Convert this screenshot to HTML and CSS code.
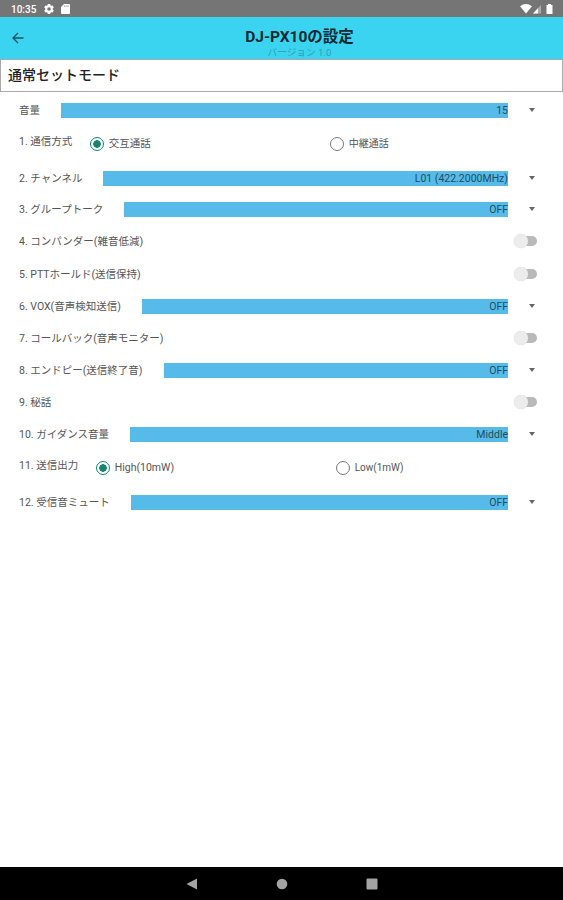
FILE: index.html
```html
<!DOCTYPE html>
<html lang="ja">
<head>
    <meta charset="UTF-8">
    <meta name="viewport" content="width=device-width, initial-scale=1.0">
    <title>DJ-PX10の設定</title>
    <link rel="stylesheet" href="styles.css">
</head>
<body>
    <div class="status-bar">
        <span class="clock">10:35</span>
        <svg class="gear" width="10" height="10" viewBox="2 2 20 20"><path fill="#fff" fill-rule="evenodd" d="M9.6 2h4.8l.5 2.7 1.8 1 2.6-.9 2.4 4.1-2.1 1.8v2.6l2.1 1.8-2.4 4.1-2.6-.9-1.8 1-.5 2.7H9.6l-.5-2.7-1.8-1-2.6.9-2.4-4.1 2.1-1.8v-2.6L2.3 8.900l2.4-4.1 2.6.9 1.8-1zM12 8.500a3.500 3.500 0 1 0 0 7 3.500 3.500 0 0 0 0-7z"/></svg>
        <svg class="sd" width="9" height="10" viewBox="0 0 9 10"><path fill="#fff" d="M3 0h5q1 0 1 1v8q0 1-1 1H1q-1 0-1-1V3z"/><path stroke="#999" stroke-width=".8" d="M3.500 1.300v1.700M5.200 1.300v1.700M6.900 1.300v1.700"/></svg>
        <svg class="signals" width="34" height="12" viewBox="0 0 34 12">
            <path fill="#fff" d="M0 3.200Q6 -1.200 12 3.200L6 10.500z"/>
            <path fill="#aaa" d="M21 2v8.500h-8z"/>
            <path fill="#fff" d="M18 5.300v5.200h-5z"/>
            <path fill="#fff" d="M28 1h3v1h1.500v9h-6V2H28z"/>
        </svg>
    </div>

    <header class="app-bar">
        <svg class="back" width="12" height="12" viewBox="0 0 12 12"><path fill="none" stroke="#1b5360" stroke-width="1.300" d="M11.500 6H1.200M6 1L1 6l5 5"/></svg>
        <div class="heading">
            <h1>DJ-PX10の設定</h1>
            <p>バージョン 1.0</p>
        </div>
    </header>

    <h2 class="mode">通常セットモード</h2>

    <main class="settings">
        <div class="row">
            <span class="label">音量</span>
            <div class="select">15</div>
            <i class="arrow"></i>
        </div>
        <div class="row radios">
            <span class="label">1. 通信方式</span>
            <div class="options">
                <span class="option"><i class="radio checked"></i>交互通話</span>
                <span class="option"><i class="radio"></i>中継通話</span>
            </div>
        </div>
        <div class="row">
            <span class="label">2. チャンネル</span>
            <div class="select">L01 (422.2000MHz)</div>
            <i class="arrow"></i>
        </div>
        <div class="row short">
            <span class="label">3. グループトーク</span>
            <div class="select">OFF</div>
            <i class="arrow"></i>
        </div>
        <div class="row tall">
            <span class="label">4. コンパンダー(雑音低減)</span>
            <i class="switch"></i>
        </div>
        <div class="row">
            <span class="label">5. PTTホールド(送信保持)</span>
            <i class="switch"></i>
        </div>
        <div class="row">
            <span class="label">6. VOX(音声検知送信)</span>
            <div class="select">OFF</div>
            <i class="arrow"></i>
        </div>
        <div class="row">
            <span class="label">7. コールバック(音声モニター)</span>
            <i class="switch"></i>
        </div>
        <div class="row">
            <span class="label">8. エンドピー(送信終了音)</span>
            <div class="select">OFF</div>
            <i class="arrow"></i>
        </div>
        <div class="row">
            <span class="label">9. 秘話</span>
            <i class="switch"></i>
        </div>
        <div class="row">
            <span class="label">10. ガイダンス音量</span>
            <div class="select">Middle</div>
            <i class="arrow"></i>
        </div>
        <div class="row radios">
            <span class="label">11. 送信出力</span>
            <div class="options">
                <span class="option"><i class="radio checked"></i>High(10mW)</span>
                <span class="option"><i class="radio"></i>Low(1mW)</span>
            </div>
        </div>
        <div class="row">
            <span class="label">12. 受信音ミュート</span>
            <div class="select">OFF</div>
            <i class="arrow"></i>
        </div>
    </main>

    <nav class="nav-bar">
        <svg width="12" height="12" viewBox="0 0 12 12"><path fill="#a3a3a3" d="M11 .5v11L.5 6z"/></svg>
        <svg width="12" height="12" viewBox="0 0 12 12"><circle cx="6" cy="6" r="5.300" fill="#a3a3a3"/></svg>
        <svg width="12" height="12" viewBox="0 0 12 12"><rect x=".5" y=".5" width="11" height="11" rx="1" fill="#a3a3a3"/></svg>
    </nav>
</body>
</html>
```
FILE: styles.css
```css
* {
    box-sizing: border-box;
}

body {
    margin: 0;
    height: 100vh;
    display: flex;
    flex-direction: column;
    background: #fff;
    color: #555;
    font-family: Roboto, "Noto Sans CJK JP", sans-serif;
    font-size: 10.5px;
    overflow: hidden;
}

svg {
    display: block;
}

.status-bar {
    height: 17px;
    flex: none;
    display: flex;
    align-items: center;
    padding: 1px 9px 0 11px;
    background: #757575;
    color: #fff;
}

.clock {
    width: 33px;
    font-size: 10px;
    font-weight: 500;
}

.sd {
    margin-left: 7px;
}

.signals {
    margin-left: auto;
}

.app-bar {
    height: 42px;
    flex: none;
    display: flex;
    align-items: center;
    padding: 0 0 0 12px;
    background: #3bd4f0;
}

.heading {
    flex: 1;
    margin-left: 12px;
    text-align: center;
}

.heading h1 {
    margin: 9px 0 0;
    color: #0b2a31;
    font-size: 15.5px;
    line-height: 20px;
    font-weight: 700;
}

.heading p {
    margin: 0;
    color: #2b9fb5;
    font-size: 9.7px;
    line-height: 12px;
}

.mode {
    height: 33px;
    flex: none;
    margin: 0;
    padding: 0 7px;
    border: 1px solid #aaa;
    color: #222;
    font-size: 14px;
    line-height: 31px;
    font-weight: 500;
}

.settings {
    flex: 1;
    padding: 2px 26px 0 19px;
}

.row {
    height: 32px;
    display: flex;
    align-items: center;
}

.row.short {
    height: 30px;
}

.row.tall {
    height: 34px;
}

.row.radios {
    height: 36px;
}

.label {
    flex: none;
    padding-top: 1px;
    line-height: 16px;
    white-space: nowrap;
}

.radios .label {
    margin-top: -6px;
}

.select {
    flex: 1;
    height: 15px;
    margin-left: 21px;
    background: #56bbe8;
    color: #234b5d;
    line-height: 16px;
    text-align: right;
}

.arrow {
    margin: 0 2px 0 21px;
    border: 3px solid transparent;
    border-top: 4px solid #666;
    border-bottom: 0;
}

.options {
    flex: 1;
    display: flex;
    margin-left: 18px;
}

.option {
    width: 240px;
    display: flex;
    align-items: center;
    line-height: 18px;
}

.option + .option {
    font-size: 10px;
}

.radio {
    width: 14px;
    height: 14px;
    margin-right: 4.5px;
    border: 1.5px solid #777;
    border-radius: 50%;
}

.radio.checked {
    border-color: #138570;
    background: radial-gradient(circle, #138570 3.5px, #fff 4px);
}

.switch {
    position: relative;
    width: 20px;
    height: 10px;
    margin-left: auto;
    border-radius: 5px;
    background: #b9b9b9;
}

.switch::before {
    content: "";
    position: absolute;
    top: -2px;
    left: -3px;
    width: 14px;
    height: 14px;
    border-radius: 50%;
    background: #ececec;
    box-shadow: 0 0 1px #ccc;
}

.nav-bar {
    height: 33px;
    flex: none;
    display: flex;
    justify-content: center;
    align-items: center;
    gap: 78px;
    background: #000;
}
```
